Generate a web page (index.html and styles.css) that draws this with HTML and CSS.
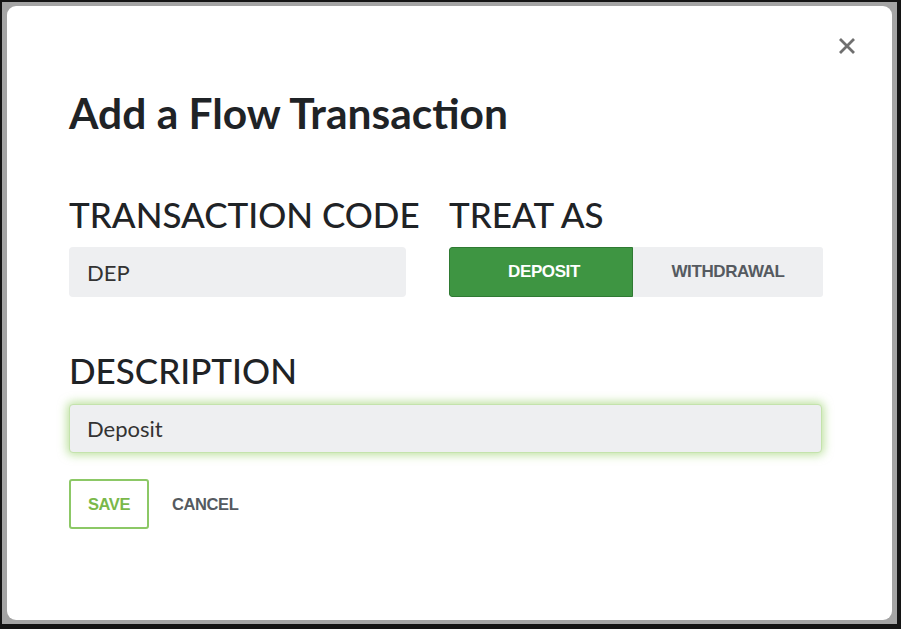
FILE: index.html
```html
<!DOCTYPE html>
<html lang="en">
<head>
  <meta charset="UTF-8">
  <meta name="viewport" content="width=device-width, initial-scale=1.0">
  <title>Add a Flow Transaction</title>
  <link rel="stylesheet" href="styles.css">
</head>
<body>

  <div class="screen">
    <!-- Modal -->
    <div class="modal">
      <button class="close-btn" aria-label="Close">
        <svg width="20" height="20" viewBox="0 0 20 20">
          <path d="M3 3 L17 17 M17 3 L3 17" stroke="#6f6f6f" stroke-width="2.8" stroke-linecap="butt" />
        </svg>
      </button>

      <h1 class="modal-title">Add a Flow Transaction</h1>

      <div class="form-row">
        <div class="field">
          <label class="field-label">TRANSACTION CODE</label>
          <div class="text-input">DEP</div>
        </div>
        <div class="field">
          <label class="field-label">TREAT AS</label>
          <div class="toggle">
            <div class="toggle-option active">DEPOSIT</div>
            <div class="toggle-option">WITHDRAWAL</div>
          </div>
        </div>
      </div>

      <div class="field field-wide">
        <label class="field-label">DESCRIPTION</label>
        <div class="text-input focused">Deposit</div>
      </div>

      <div class="form-actions">
        <button class="btn-save">SAVE</button>
        <button class="btn-cancel">CANCEL</button>
      </div>
    </div>
  </div>

</body>
</html>
```

FILE: styles.css
```css
* { box-sizing: border-box; }

body {
  margin: 0;
  padding: 0;
  background: #111;
  font-family: Lato, "Noto Sans", sans-serif;
}

.screen {
  width: 901px;
  height: 629px;
  border-style: solid;
  border-color: #141414;
  border-width: 2px 4px 5px 2px;
  background: #a4a4a4;
  padding: 4px 5px;
}

.modal {
  position: relative;
  height: 614px;
  background: #fff;
  border-radius: 9px;
  padding: 82px 68px 0 62px;
}

.close-btn {
  position: absolute;
  top: 30px;
  right: 35px;
  width: 20px;
  height: 20px;
  padding: 0;
  border: none;
  background: none;
  cursor: pointer;
}
.close-btn svg { display: block; }

.modal-title {
  margin: 0;
  font-size: 42.5px;
  font-weight: 700;
  line-height: 50px;
  color: #1f2326;
}

.form-row {
  display: grid;
  grid-template-columns: 337px 374px;
  column-gap: 43px;
  margin-top: 56px;
}

.field {
  display: flex;
  flex-direction: column;
}
.field-wide {
  margin-top: 53px;
  width: 753px;
}

.field-label {
  font-size: 35px;
  font-weight: 500;
  line-height: 40px;
  color: #1f2326;
  white-space: nowrap;
  margin-bottom: 13px;
}
.field-wide .field-label { margin-bottom: 14px; }

.text-input {
  height: 50px;
  background: #eeeff1;
  border-radius: 4px;
  padding: 0 18px;
  display: flex;
  align-items: center;
  font-size: 22px;
  color: #333;
}
.text-input.focused {
  height: 49px;
  border: 1px solid #c4e3ac;
  padding: 0 17px;
  box-shadow: 0 0 10px 2px rgba(145, 205, 95, 0.6);
}

.toggle {
  display: flex;
  height: 50px;
  border-radius: 3px;
  background: #eeeff1;
  overflow: hidden;
}
.toggle-option {
  display: flex;
  align-items: center;
  justify-content: center;
  font-family: "Liberation Sans", Arial, sans-serif;
  font-weight: 700;
  font-size: 17px;
  letter-spacing: -0.4px;
  color: #555a60;
  width: 190px;
}
.toggle-option.active {
  width: 184px;
  background: #3e9542;
  border: 1px solid #2f7a33;
  border-radius: 3px 0 0 3px;
  color: #fff;
  padding-left: 6px;
}

.form-actions {
  display: flex;
  align-items: center;
  gap: 23px;
  margin-top: 26px;
}
.btn-save,
.btn-cancel {
  font-family: "Liberation Sans", Arial, sans-serif;
  font-weight: 700;
  font-size: 16.5px;
  letter-spacing: -0.4px;
  background: none;
  cursor: pointer;
}
.btn-save {
  width: 80px;
  height: 50px;
  border: 2px solid #8cc866;
  border-radius: 3px;
  color: #7ab84a;
}
.btn-cancel {
  border: none;
  padding: 0;
  color: #555a60;
}
```
